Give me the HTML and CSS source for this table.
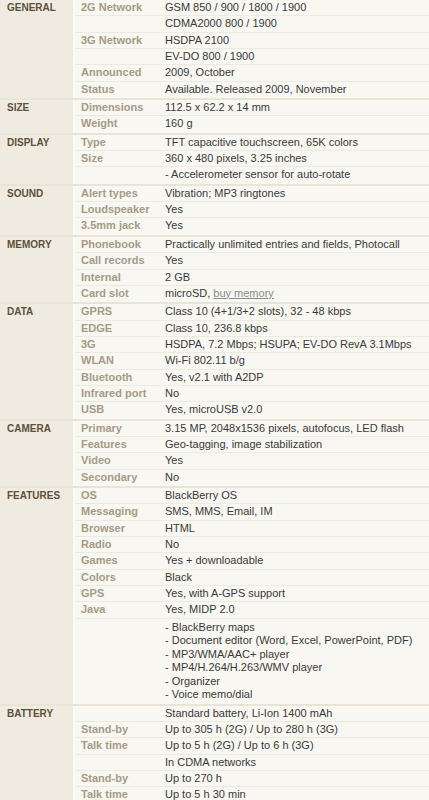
FILE: index.html
```html
<!DOCTYPE html>
<html>
<head>
<meta charset="utf-8">
<link rel="stylesheet" href="styles.css">
</head>
<body>
<div class="specs">
  <section class="sec">
    <div class="cat">GENERAL</div>
    <div class="rows">
      <div class="row"><span class="lbl">2G Network</span><span class="val">GSM 850 / 900 / 1800 / 1900</span></div>
      <div class="row"><span class="lbl"></span><span class="val">CDMA2000 800 / 1900</span></div>
      <div class="row"><span class="lbl">3G Network</span><span class="val">HSDPA 2100</span></div>
      <div class="row"><span class="lbl"></span><span class="val">EV-DO 800 / 1900</span></div>
      <div class="row"><span class="lbl">Announced</span><span class="val">2009, October</span></div>
      <div class="row"><span class="lbl">Status</span><span class="val">Available. Released 2009, November</span></div>
    </div>
  </section>
  <section class="sec">
    <div class="cat">SIZE</div>
    <div class="rows">
      <div class="row"><span class="lbl">Dimensions</span><span class="val">112.5 x 62.2 x 14 mm</span></div>
      <div class="row"><span class="lbl">Weight</span><span class="val">160 g</span></div>
    </div>
  </section>
  <section class="sec">
    <div class="cat">DISPLAY</div>
    <div class="rows">
      <div class="row"><span class="lbl">Type</span><span class="val">TFT capacitive touchscreen, 65K colors</span></div>
      <div class="row"><span class="lbl">Size</span><span class="val">360 x 480 pixels, 3.25 inches</span></div>
      <div class="row"><span class="lbl"></span><span class="val">- Accelerometer sensor for auto-rotate</span></div>
    </div>
  </section>
  <section class="sec">
    <div class="cat">SOUND</div>
    <div class="rows">
      <div class="row"><span class="lbl">Alert types</span><span class="val">Vibration; MP3 ringtones</span></div>
      <div class="row"><span class="lbl">Loudspeaker</span><span class="val">Yes</span></div>
      <div class="row"><span class="lbl">3.5mm jack</span><span class="val">Yes</span></div>
    </div>
  </section>
  <section class="sec">
    <div class="cat">MEMORY</div>
    <div class="rows">
      <div class="row"><span class="lbl">Phonebook</span><span class="val">Practically unlimited entries and fields, Photocall</span></div>
      <div class="row"><span class="lbl">Call records</span><span class="val">Yes</span></div>
      <div class="row"><span class="lbl">Internal</span><span class="val">2 GB</span></div>
      <div class="row"><span class="lbl">Card slot</span><span class="val">microSD, <a class="link" href="#">buy memory</a></span></div>
    </div>
  </section>
  <section class="sec">
    <div class="cat">DATA</div>
    <div class="rows">
      <div class="row"><span class="lbl">GPRS</span><span class="val">Class 10 (4+1/3+2 slots), 32 - 48 kbps</span></div>
      <div class="row"><span class="lbl">EDGE</span><span class="val">Class 10, 236.8 kbps</span></div>
      <div class="row"><span class="lbl">3G</span><span class="val">HSDPA, 7.2 Mbps; HSUPA; EV-DO RevA 3.1Mbps</span></div>
      <div class="row"><span class="lbl">WLAN</span><span class="val">Wi-Fi 802.11 b/g</span></div>
      <div class="row"><span class="lbl">Bluetooth</span><span class="val">Yes, v2.1 with A2DP</span></div>
      <div class="row"><span class="lbl">Infrared port</span><span class="val">No</span></div>
      <div class="row"><span class="lbl">USB</span><span class="val">Yes, microUSB v2.0</span></div>
    </div>
  </section>
  <section class="sec">
    <div class="cat">CAMERA</div>
    <div class="rows">
      <div class="row"><span class="lbl">Primary</span><span class="val">3.15 MP, 2048x1536 pixels, autofocus, LED flash</span></div>
      <div class="row"><span class="lbl">Features</span><span class="val">Geo-tagging, image stabilization</span></div>
      <div class="row"><span class="lbl">Video</span><span class="val">Yes</span></div>
      <div class="row"><span class="lbl">Secondary</span><span class="val">No</span></div>
    </div>
  </section>
  <section class="sec">
    <div class="cat">FEATURES</div>
    <div class="rows">
      <div class="row"><span class="lbl">OS</span><span class="val">BlackBerry OS</span></div>
      <div class="row"><span class="lbl">Messaging</span><span class="val">SMS, MMS, Email, IM</span></div>
      <div class="row"><span class="lbl">Browser</span><span class="val">HTML</span></div>
      <div class="row"><span class="lbl">Radio</span><span class="val">No</span></div>
      <div class="row"><span class="lbl">Games</span><span class="val">Yes + downloadable</span></div>
      <div class="row"><span class="lbl">Colors</span><span class="val">Black</span></div>
      <div class="row"><span class="lbl">GPS</span><span class="val">Yes, with A-GPS support</span></div>
      <div class="row"><span class="lbl">Java</span><span class="val">Yes, MIDP 2.0</span></div>
      <div class="row multi"><span class="lbl"></span><span class="val">- BlackBerry maps<br>- Document editor (Word, Excel, PowerPoint, PDF)<br>- MP3/WMA/AAC+ player<br>- MP4/H.264/H.263/WMV player<br>- Organizer<br>- Voice memo/dial</span></div>
    </div>
  </section>
  <section class="sec">
    <div class="cat">BATTERY</div>
    <div class="rows">
      <div class="row"><span class="lbl"></span><span class="val">Standard battery, Li-Ion 1400 mAh</span></div>
      <div class="row"><span class="lbl">Stand-by</span><span class="val">Up to 305 h (2G) / Up to 280 h (3G)</span></div>
      <div class="row"><span class="lbl">Talk time</span><span class="val">Up to 5 h (2G) / Up to 6 h (3G)</span></div>
      <div class="row"><span class="lbl"></span><span class="val">In CDMA networks</span></div>
      <div class="row"><span class="lbl">Stand-by</span><span class="val">Up to 270 h</span></div>
      <div class="row"><span class="lbl">Talk time</span><span class="val">Up to 5 h 30 min</span></div>
    </div>
  </section>
</div>
</body>
</html>
```
FILE: styles.css
```css
html, body {
  margin: 0;
  padding: 0;
  background: #f8f7f1;
}
.specs {
  width: 429px;
  font-family: "Liberation Sans", Arial, sans-serif;
  font-size: 11px;
  color: #3a3a3a;
}
.sec {
  display: flex;
  border-bottom: 2px solid #e8e4d8;
}
.cat {
  width: 66px;
  flex: none;
  padding-left: 7px;
  background: #efebe1;
  border-right: 2px solid #fcfbf8;
  font-size: 10px;
  font-weight: bold;
  color: #5e5038;
  line-height: 16.3px;
}
.rows {
  flex: 1;
  display: flex;
  flex-direction: column;
}
.row {
  display: flex;
  height: 16.35px;
  line-height: 15.4px;
  border-bottom: 1px solid #edeae0;
  box-sizing: border-box;
  padding-left: 6px;
}
.row:last-child {
  border-bottom: none;
}
.lbl {
  width: 84px;
  flex: none;
  font-weight: bold;
  color: #a59b88;
}
.val {
  white-space: nowrap;
}
.row.multi {
  height: auto;
  line-height: 13.5px;
  padding-top: 2px;
  padding-bottom: 2px;
}
.link {
  color: #8a8a8a;
  text-decoration: underline;
}
```
